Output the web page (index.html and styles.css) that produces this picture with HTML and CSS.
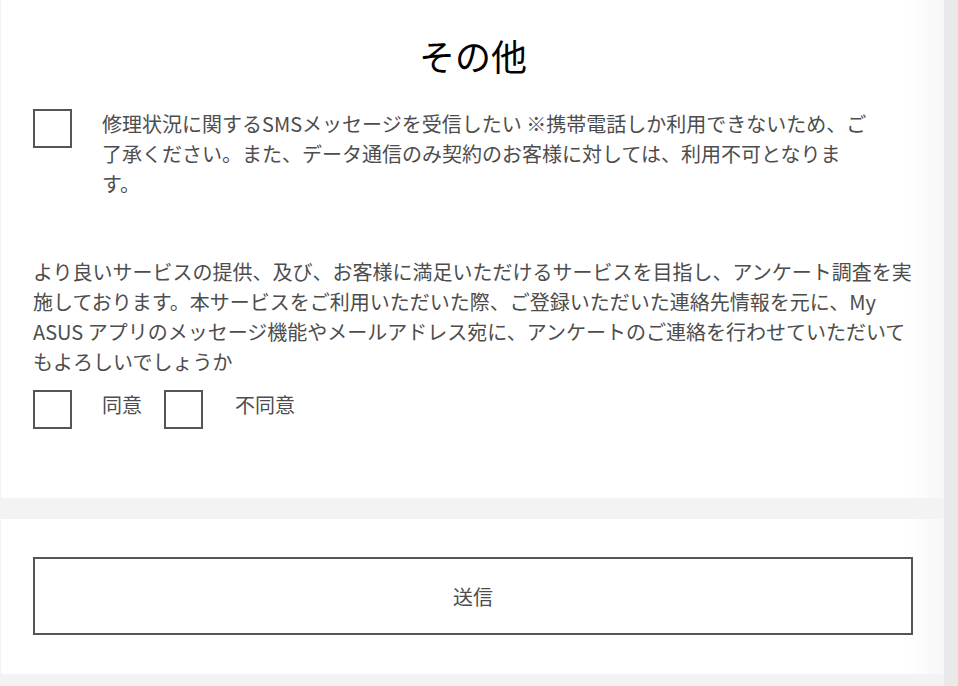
FILE: index.html
```html
<!DOCTYPE html>
<html lang="ja">

<head>
    <meta charset="UTF-8">
    <meta name="viewport" content="width=device-width, initial-scale=1.0">
    <title>その他</title>
    <link rel="stylesheet" href="styles.css">
</head>

<body>
    <div class="pagina">
        <div class="cartao outros">
            <h1>その他</h1>
            <div class="linha sms">
                <span class="caixa"></span>
                <label class="texto-sms">修理状況に関するSMSメッセージを受信したい ※携帯電話しか利用できないため、ご了承ください。また、データ通信のみ契約のお客様に対しては、利用不可となります。</label>
            </div>
            <p class="pesquisa">より良いサービスの提供、及び、お客様に満足いただけるサービスを目指し、アンケート調査を実施しております。本サービスをご利用いただいた際、ご登録いただいた連絡先情報を元に、My ASUS アプリのメッセージ機能やメールアドレス宛に、アンケートのご連絡を行わせていただいてもよろしいでしょうか</p>
            <div class="linha opcoes">
                <span class="caixa"></span>
                <label>同意</label>
                <span class="caixa"></span>
                <label>不同意</label>
            </div>
        </div>
        <div class="cartao envio">
            <button class="enviar">送信</button>
        </div>
    </div>
</body>

</html>
```

FILE: styles.css
```css
body {
    margin: 0;
    padding: 0;
    font-family: "Noto Sans CJK JP", "Noto Sans", sans-serif;
    color: #4d4d4d;
    background: linear-gradient(to right, #f3f3f3 944px, #e9e9e9 944px);
}

.pagina {
    width: 943px;
    margin-left: 1px;
    display: flex;
    flex-direction: column;
    gap: 21px;
    padding-bottom: 12px;
}

.cartao {
    background: linear-gradient(to right, #ffffff 905px, #f7f7f7 943px);
    padding: 0 31px 0 32px;
}

.outros {
    height: 498px;
    box-sizing: border-box;
    padding-top: 30px;
}

.outros h1 {
    margin: 0;
    text-align: center;
    font-size: 36px;
    font-weight: 400;
    line-height: 50px;
    color: #000000;
}

.linha {
    display: flex;
    align-items: flex-start;
}

.caixa {
    flex: none;
    width: 35px;
    height: 35px;
    border: 2px solid #555555;
    margin-right: 30px;
}

.sms {
    margin-top: 29px;
}

.texto-sms {
    width: 770px;
    font-size: 20px;
    line-height: 30px;
}

.pesquisa {
    margin: 58px 0 0 0;
    width: 880px;
    font-size: 20px;
    line-height: 30px;
}

.opcoes {
    margin-top: 13px;
}

.opcoes label {
    font-size: 20px;
    line-height: 30px;
    margin-right: 22px;
}

.opcoes .caixa + label + .caixa {
    margin-right: 32px;
}

.envio {
    height: 155px;
    box-sizing: border-box;
    padding-top: 38px;
}

.enviar {
    display: block;
    width: 880px;
    height: 78px;
    background: #ffffff;
    border: 2px solid #555555;
    font-family: "Noto Sans CJK JP", "Noto Sans", sans-serif;
    font-size: 20px;
    color: #4d4d4d;
    cursor: pointer;
}
```
